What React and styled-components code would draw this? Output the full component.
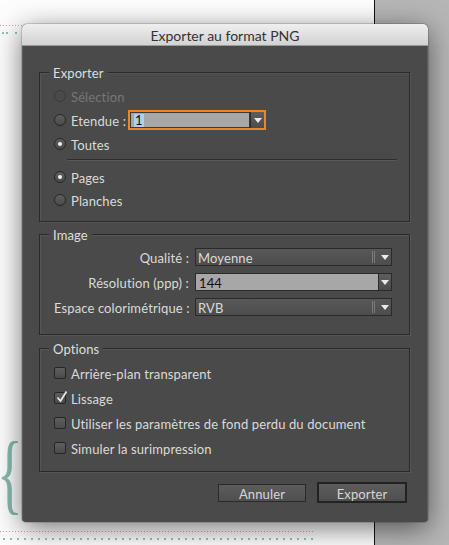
import React from "react";
import styled, { createGlobalStyle } from "styled-components";

const Global = createGlobalStyle`
  html, body { margin: 0; padding: 0; background: #fff; overflow: hidden; }
  * { box-sizing: border-box; }
`;

const FONT = `"Lato", "Liberation Sans", sans-serif`;

const Canvas = styled.div`
  position: relative;
  width: 449px;
  height: 545px;
  overflow: hidden;
  display: flex;
  font-family: ${FONT};
`;

const Paper = styled.div`
  width: 375px;
  height: 100%;
  background: #fdfdfd;
  border-right: 1px solid #111;
`;

const Pasteboard = styled.div`
  flex: 1;
  height: 100%;
  background: #b6b6b6;
`;

const DotLine = styled.div`
  position: absolute;
  left: 0;
  top: ${(p) => p.$top}px;
  width: ${(p) => p.$w}px;
  height: ${(p) => p.$h}px;
  background-image: repeating-linear-gradient(
    to right,
    ${(p) => p.$color} 0 ${(p) => p.$dot}px,
    transparent ${(p) => p.$dot}px ${(p) => p.$step}px
  );
  background-position: ${(p) => p.$offset || 0}px 0;
`;

const Brace = styled.span`
  position: absolute;
  left: -3px;
  top: 429px;
  font-family: "Liberation Serif", serif;
  font-size: 89px;
  line-height: 1;
  color: #86bcad;
  transform: scaleX(0.6);
  transform-origin: left top;
`;

const Dialog = styled.div`
  position: absolute;
  left: 22px;
  top: 24px;
  width: 406px;
  height: 498px;
  border-radius: 5px 5px 4px 4px;
  box-shadow: 0 6px 28px rgba(0, 0, 0, 0.55), 0 0 0 1px rgba(0, 0, 0, 0.15);
  display: flex;
  flex-direction: column;
  overflow: hidden;
  background: #4a4a4a;
`;

const TitleBar = styled.div`
  height: 22px;
  flex: none;
  background: linear-gradient(#efefef, #d2d2d2);
  border-bottom: 1px solid #9a9a9a;
  display: flex;
  align-items: center;
  justify-content: center;
  font-size: 14px;
  color: #333;
  padding-top: 2px;
`;

const Body = styled.div`
  flex: 1;
  padding: 26px 17px 0 17px;
  box-shadow: inset 1px 0 0 #5c5c5c, inset -1px 0 0 #5c5c5c;
  display: flex;
  flex-direction: column;
  gap: 12px;
  color: #dadada;
  font-size: 13px;
  letter-spacing: 0.12px;
`;

const Group = styled.div`
  position: relative;
  width: 371px;
  border: 1px solid #2a2a2a;
  box-shadow: inset 1px 1px 0 rgba(255, 255, 255, 0.07), 1px 1px 0 rgba(255, 255, 255, 0.07);
  padding: ${(p) => p.$pad};
  margin-top: ${(p) => p.$mt || 0}px;
`;

const Legend = styled.span`
  position: absolute;
  left: 9px;
  top: -8px;
  padding: 0 4px;
  background: #4a4a4a;
  line-height: 16px;
  color: #dedede;
`;

const Row = styled.div`
  height: ${(p) => p.$h}px;
  display: flex;
  align-items: center;
  gap: 5px;
  color: ${(p) => (p.$disabled ? "#767676" : "#dadada")};
`;

const Text = styled.span`
  padding-top: 2px;
  white-space: nowrap;
`;

const Radio = styled.span`
  width: 12px;
  height: 12px;
  border-radius: 50%;
  flex: none;
  border: 1px solid ${(p) => (p.$disabled ? "#3a3a3a" : "#262626")};
  background: ${(p) =>
    p.$disabled ? "#4a4a4a" : "linear-gradient(#5f5f5f, #4a4a4a)"};
  display: flex;
  align-items: center;
  justify-content: center;
  &::after {
    content: "";
    width: 4px;
    height: 4px;
    border-radius: 50%;
    background: #f0f0f0;
    display: ${(p) => (p.$on ? "block" : "none")};
  }
`;

const Separator = styled.div`
  margin: 3px 12px 4px 13px;
  height: 2px;
  border-top: 1px solid #2e2e2e;
  border-bottom: 1px solid #585858;
`;

const Combo = styled.div`
  display: flex;
  width: ${(p) => p.$w}px;
  height: ${(p) => p.$hgt}px;
  border: ${(p) => (p.$focus ? "2px solid #ee8626" : "1px solid #2a2a2a")};
  background: #2a2a2a;
  margin-left: ${(p) => p.$ml || 0}px;
`;

const ComboField = styled.div`
  flex: 1;
  background: #a7a7a7;
  color: #111;
  display: flex;
  align-items: center;
  padding: 1px 0 0 3px;
  border: ${(p) => (p.$focus ? "1px solid #3a3a3a" : "none")};
  font-size: 13px;
`;

const Selected = styled.span`
  background: #b5cdf0;
  line-height: 13px;
  padding: 0 1px;
`;

const DropBtn = styled.div`
  width: ${(p) => p.$w || 13}px;
  flex: none;
  background: linear-gradient(#5e5e5e, #4c4c4c);
  border-left: 1px solid #2a2a2a;
  display: flex;
  align-items: center;
  justify-content: center;
`;

const Tri = styled.span`
  width: 0;
  height: 0;
  border-left: 4px solid transparent;
  border-right: 4px solid transparent;
  border-top: 5px solid #eaeaea;
  margin-top: 1px;
`;

const Popup = styled.div`
  width: 197px;
  height: 18px;
  border: 1px solid #2a2a2a;
  background: linear-gradient(#585858, #4d4d4d);
  display: flex;
  align-items: center;
  color: #dadada;
  padding-left: 2px;
`;

const PopupText = styled.span`
  flex: 1;
  padding-top: 2px;
`;

const PopupDivider = styled.span`
  width: 3px;
  height: 12px;
  border-left: 1px solid #7a7a7a;
  border-right: 1px solid #7a7a7a;
  margin-right: 3px;
`;

const PopupArrow = styled.span`
  width: 13px;
  display: flex;
  justify-content: center;
`;

const FieldRow = styled.div`
  display: grid;
  grid-template-columns: 135px 197px;
  column-gap: 6px;
  align-items: center;
  height: 18px;
  & + & {
    margin-top: 7px;
  }
`;

const FieldLabel = styled.span`
  text-align: right;
  white-space: nowrap;
  padding-top: 2px;
`;

const Check = styled.span`
  position: relative;
  width: 12px;
  height: 12px;
  flex: none;
  border: 1px solid #262626;
  border-radius: 2px;
  background: linear-gradient(#5f5f5f, #4a4a4a);
`;

const CheckMark = styled.svg`
  position: absolute;
  left: 1px;
  top: -3px;
`;

const Buttons = styled.div`
  display: flex;
  justify-content: flex-end;
  align-items: center;
  gap: 11px;
  padding-right: 4px;
  margin-top: -2px;
`;

const Button = styled.button`
  font-family: ${FONT};
  font-size: 13px;
  letter-spacing: 0.12px;
  color: #d6d6d6;
  width: ${(p) => (p.$default ? 90 : 88)}px;
  height: ${(p) => (p.$default ? 21 : 18)}px;
  border: ${(p) => (p.$default ? "2px solid #222" : "1px solid #2a2a2a")};
  background: linear-gradient(#5c5c5c, #4f4f4f);
  padding: 2px 0 0;
  display: flex;
  align-items: center;
  justify-content: center;
`;

function Checkbox({ checked }) {
  return (
    <Check>
      {checked && (
        <CheckMark width="12" height="13" viewBox="0 0 12 13">
          <path d="M1.5 7.5 L4.5 11 L10.5 1.5" fill="none" stroke="#e8e8e8" strokeWidth="1.8" />
        </CheckMark>
      )}
    </Check>
  );
}

export default function App() {
  return (
    <>
      <Global />
      <Canvas>
        <Paper />
        <Pasteboard />
        <DotLine $top={25} $w={22} $h={1} $color="#e49aa2" $dot={1} $step={3} />
        <DotLine $top={32} $w={22} $h={2} $color="#8fc3b4" $dot={2} $step={9} $offset={6} />
        <DotLine $top={531} $w={313} $h={1} $color="#e49aa2" $dot={1} $step={3} />
        <DotLine $top={538} $w={313} $h={2} $color="#8fc3b4" $dot={2} $step={7} $offset={3} />
        <Brace>{"{"}</Brace>
        <Dialog>
          <TitleBar>Exporter au format PNG</TitleBar>
          <Body>
            <Group $pad="11px 0 10px 14px">
              <Legend>Exporter</Legend>
              <Row $h={24} $disabled>
                <Radio $disabled />
                <Text>Sélection</Text>
              </Row>
              <Row $h={24}>
                <Radio />
                <Text>Etendue :</Text>
                <Combo $w={138} $hgt={20} $focus $ml={-3}>
                  <ComboField $focus>
                    <Selected>1</Selected>
                  </ComboField>
                  <DropBtn $w={14}>
                    <Tri />
                  </DropBtn>
                </Combo>
              </Row>
              <Row $h={24}>
                <Radio $on />
                <Text>Toutes</Text>
              </Row>
              <Separator />
              <Row $h={23}>
                <Radio $on />
                <Text>Pages</Text>
              </Row>
              <Row $h={23}>
                <Radio />
                <Text>Planches</Text>
              </Row>
            </Group>

            <Group $pad="13px 0 18px 14px">
              <Legend>Image</Legend>
              <FieldRow>
                <FieldLabel>Qualité :</FieldLabel>
                <Popup>
                  <PopupText>Moyenne</PopupText>
                  <PopupDivider />
                  <PopupArrow>
                    <Tri />
                  </PopupArrow>
                </Popup>
              </FieldRow>
              <FieldRow>
                <FieldLabel>Résolution (ppp) :</FieldLabel>
                <Combo $w={197} $hgt={18}>
                  <ComboField>144</ComboField>
                  <DropBtn $w={13}>
                    <Tri />
                  </DropBtn>
                </Combo>
              </FieldRow>
              <FieldRow>
                <FieldLabel>Espace colorimétrique :</FieldLabel>
                <Popup>
                  <PopupText>RVB</PopupText>
                  <PopupDivider />
                  <PopupArrow>
                    <Tri />
                  </PopupArrow>
                </Popup>
              </FieldRow>
            </Group>

            <Group $pad="11px 0 11px 14px" $mt={1}>
              <Legend>Options</Legend>
              <Row $h={25}>
                <Checkbox />
                <Text>Arrière-plan transparent</Text>
              </Row>
              <Row $h={25}>
                <Checkbox checked />
                <Text>Lissage</Text>
              </Row>
              <Row $h={25}>
                <Checkbox />
                <Text>Utiliser les paramètres de fond perdu du document</Text>
              </Row>
              <Row $h={25}>
                <Checkbox />
                <Text>Simuler la surimpression</Text>
              </Row>
            </Group>

            <Buttons>
              <Button>Annuler</Button>
              <Button $default>Exporter</Button>
            </Buttons>
          </Body>
        </Dialog>
      </Canvas>
    </>
  );
}
